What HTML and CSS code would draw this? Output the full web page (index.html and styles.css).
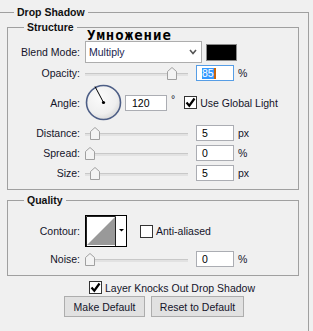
FILE: index.html
```html
<!DOCTYPE html>
<html lang="en">
<head>
<meta charset="UTF-8">
<title>Drop Shadow</title>
<link rel="stylesheet" href="styles.css">
</head>
<body>

<fieldset class="panel">
  <legend>Drop Shadow</legend>

  <fieldset class="group">
    <legend>Structure</legend>

    <div class="row blend">
      <span class="label">Blend Mode:</span>
      <div class="select">
        <span>Multiply</span>
        <svg width="8" height="6" viewBox="0 0 8 6"><path d="M1 1L4 4.5L7 1" fill="none" stroke="#555" stroke-width="1.6"/></svg>
      </div>
      <div class="swatch"></div>
    </div>

    <div class="row opacity">
      <span class="label">Opacity:</span>
      <div class="slider">
        <div class="track"></div>
        <svg class="thumb" style="left: 82px" width="10" height="13" viewBox="0 0 10 13"><path d="M0.5 12.5V4.5L5 0.5L9.5 4.5V12.5Z" fill="#f3f3f3" stroke="#a0a0a0"/></svg>
      </div>
      <div class="field focus"><span class="sel">85</span><span class="caret"></span></div>
      <span class="unit">%</span>
    </div>

    <div class="row angle">
      <span class="label">Angle:</span>
      <svg class="dial" width="37" height="37" viewBox="0 0 37 37">
        <defs>
          <radialGradient id="dialFill" cx="40%" cy="35%" r="70%">
            <stop offset="0" stop-color="#fbfbfb"/>
            <stop offset="0.7" stop-color="#efefef"/>
            <stop offset="1" stop-color="#d6d6d6"/>
          </radialGradient>
        </defs>
        <circle cx="18.5" cy="18.5" r="17" fill="url(#dialFill)" stroke="#4d5e86" stroke-width="1.6"/>
        <line x1="18.5" y1="18.5" x2="10" y2="2.5" stroke="#000" stroke-width="1"/>
        <circle cx="18.5" cy="18.5" r="1.6" fill="#000"/>
      </svg>
      <div class="field wide">120</div>
      <span class="deg">°</span>
      <span class="check on">
        <svg width="11" height="11" viewBox="0 0 11 11"><path d="M1.5 5.5L4.3 8.7L9.5 1.5" fill="none" stroke="#000" stroke-width="2.2"/></svg>
      </span>
      <span>Use Global Light</span>
    </div>

    <div class="row">
      <span class="label">Distance:</span>
      <div class="slider">
        <div class="track"></div>
        <svg class="thumb" style="left: 5px" width="10" height="13" viewBox="0 0 10 13"><path d="M0.5 12.5V4.5L5 0.5L9.5 4.5V12.5Z" fill="#f3f3f3" stroke="#a0a0a0"/></svg>
      </div>
      <div class="field">5</div>
      <span class="unit">px</span>
    </div>

    <div class="row">
      <span class="label">Spread:</span>
      <div class="slider">
        <div class="track"></div>
        <svg class="thumb" style="left: 0px" width="10" height="13" viewBox="0 0 10 13"><path d="M0.5 12.5V4.5L5 0.5L9.5 4.5V12.5Z" fill="#f3f3f3" stroke="#a0a0a0"/></svg>
      </div>
      <div class="field">0</div>
      <span class="unit">%</span>
    </div>

    <div class="row">
      <span class="label">Size:</span>
      <div class="slider">
        <div class="track"></div>
        <svg class="thumb" style="left: 5px" width="10" height="13" viewBox="0 0 10 13"><path d="M0.5 12.5V4.5L5 0.5L9.5 4.5V12.5Z" fill="#f3f3f3" stroke="#a0a0a0"/></svg>
      </div>
      <div class="field">5</div>
      <span class="unit">px</span>
    </div>
  </fieldset>

  <fieldset class="group quality">
    <legend>Quality</legend>

    <div class="row contour">
      <span class="label">Contour:</span>
      <svg width="42" height="32" viewBox="0 0 42 32">
        <rect x="0.5" y="0.5" width="41" height="31" fill="#fff" stroke="#000"/>
        <path d="M2 30L30 2V30Z" fill="#999"/>
        <path d="M1.5 31V1.5H30.5V31" fill="none" stroke="#222"/>
        <path d="M34 14H39L36.5 16.5Z" fill="#000"/>
      </svg>
      <span class="check aa"></span>
      <span>Anti-aliased</span>
    </div>

    <div class="row">
      <span class="label">Noise:</span>
      <div class="slider">
        <div class="track"></div>
        <svg class="thumb" style="left: 0px" width="10" height="13" viewBox="0 0 10 13"><path d="M0.5 12.5V4.5L5 0.5L9.5 4.5V12.5Z" fill="#f3f3f3" stroke="#a0a0a0"/></svg>
      </div>
      <div class="field">0</div>
      <span class="unit">%</span>
    </div>
  </fieldset>

  <div class="knock">
    <span class="check on">
      <svg width="11" height="11" viewBox="0 0 11 11"><path d="M1.5 5.5L4.3 8.7L9.5 1.5" fill="none" stroke="#000" stroke-width="2.2"/></svg>
    </span>
    <span>Layer Knocks Out Drop Shadow</span>
  </div>

  <div class="buttons">
    <button class="btn make">Make Default</button>
    <button class="btn reset">Reset to Default</button>
  </div>
</fieldset>

<div class="note">Умножение</div>

</body>
</html>
```

FILE: styles.css
```css
html, body {
  margin: 0;
  overflow: hidden;
  background: #f0f0f0;
}
body {
  position: relative;
  width: 313px;
  height: 331px;
  font-family: "Liberation Sans", Arial, sans-serif;
  font-size: 10.5px;
  color: #14142a;
}

fieldset {
  margin: 0;
  padding: 0;
  min-width: 0;
  border: 1px solid #a0a0a0;
  box-sizing: border-box;
}
legend {
  padding: 0 3px;
  font-weight: bold;
  line-height: 13px;
  color: #111;
}

/* outer frame, left edge sits off screen */
.panel {
  margin: 6px 0 0 -4px;
  width: 313px;
  height: 340px;
}
.panel > legend {
  margin-left: 17px;
}

.group {
  margin: 2px 0 0 10px;
  width: 292px;
  padding: 7px 0 8px;
}
.group > legend {
  margin-left: 16px;
}
.quality {
  margin-top: 4px;
  padding-top: 8px;
}

.row {
  display: flex;
  align-items: center;
  height: 16px;
  margin-top: 4px;
}
.row.blend {
  height: 22px;
  margin-top: 0;
}
.row.opacity {
  margin-top: 2px;
}
.row.angle {
  height: 37px;
  margin-top: 3px;
}
.row.contour {
  height: 32px;
  margin-top: 0;
}
.label {
  flex: none;
  width: 72px;
  margin-right: 5px;
  text-align: right;
}

.select {
  display: flex;
  align-items: center;
  justify-content: space-between;
  width: 117px;
  height: 22px;
  box-sizing: border-box;
  padding: 0 4px 0 3px;
  border: 1px solid #adadad;
  background: #fff;
  color: #1a2450;
}
.swatch {
  width: 31px;
  height: 17px;
  box-sizing: border-box;
  margin-left: 4px;
  border: 1px solid #8a8a8a;
  background: #000;
}

.slider {
  position: relative;
  flex: none;
  width: 103px;
  height: 16px;
  margin-right: 8px;
}
.track {
  height: 3px;
  margin-top: 8px;
  background: linear-gradient(#c8c8c8 1px, #e2e2e2 1px);
}
.thumb {
  position: absolute;
  top: 2px;
}

.field {
  flex: none;
  display: flex;
  align-items: center;
  width: 38px;
  height: 16px;
  box-sizing: border-box;
  padding-left: 5px;
  border: 1px solid #abadb3;
  background: #fff;
  color: #000;
}
.field.focus {
  border-color: #569de5;
}
.field.wide {
  width: 42px;
  padding-left: 6px;
}
.sel {
  background: #3399ff;
  color: #fff;
  line-height: 11px;
}
.caret {
  width: 2px;
  height: 11px;
  background: #c8640a;
}
.unit {
  margin-left: 4px;
}

.dial {
  flex: none;
  margin-right: 3px;
}
.deg {
  align-self: flex-start;
  margin: 9px 0 0 4px;
}

.check {
  flex: none;
  display: flex;
  align-items: center;
  justify-content: center;
  width: 13px;
  height: 13px;
  box-sizing: border-box;
  margin: 0 3px 0 9px;
  border: 1px solid #333;
  background: #fff;
}
.check.aa {
  margin-left: 13px;
}

.knock {
  display: flex;
  align-items: center;
  height: 13px;
  margin-top: 5px;
  padding-left: 92px;
}
.knock .check {
  margin-left: 0;
}

.buttons {
  display: flex;
  gap: 6px;
  margin-top: 2px;
  padding-left: 67px;
}
.btn {
  height: 21px;
  padding: 0;
  border: 1px solid #adadad;
  background: #e1e1e1;
  font: inherit;
  color: #14142a;
}
.btn.make {
  width: 81px;
}
.btn.reset {
  width: 93px;
}

/* caption pasted over the dialog */
.note {
  position: absolute;
  left: 87px;
  top: 28px;
  font-family: "DejaVu Sans Mono", monospace;
  font-weight: bold;
  font-size: 14px;
  line-height: 14px;
  letter-spacing: 1px;
  color: #000;
}
```
